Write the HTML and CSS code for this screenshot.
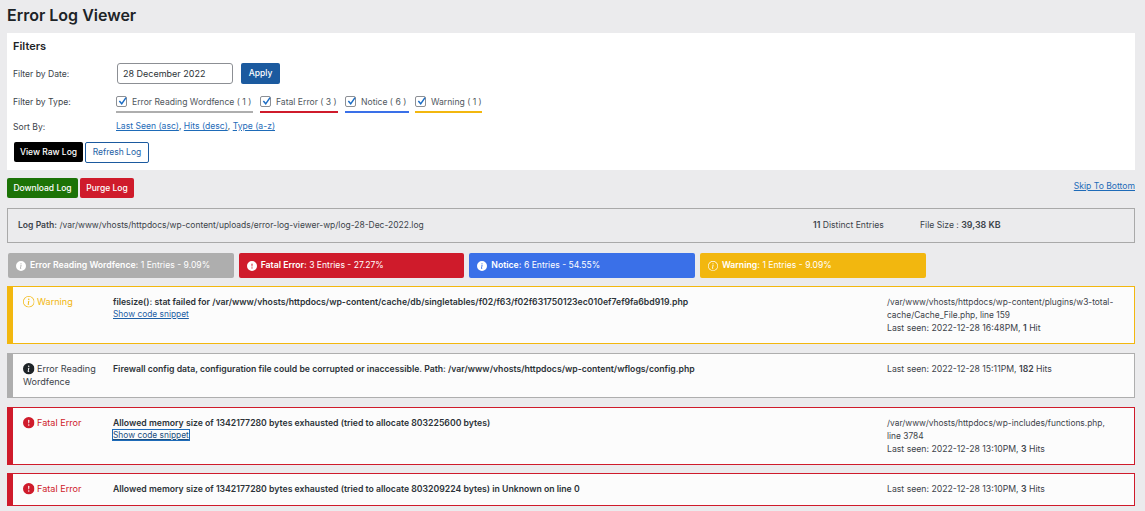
FILE: index.html
```html
<!DOCTYPE html>
<html lang="en">
<head>
<meta charset="utf-8">
<title>Error Log Viewer</title>
<link rel="stylesheet" href="styles.css">
</head>
<body>
<svg class="defs" width="0" height="0" aria-hidden="true">
  <symbol id="info-solid" viewBox="0 0 16 16"><path fill="currentColor" d="M8 16A8 8 0 1 0 8 0a8 8 0 0 0 0 16zm.93-9.41-1 4.71c-.07.34.03.53.3.53.2 0 .49-.07.69-.25l-.09.42c-.29.35-.92.6-1.46.6-.7 0-1-.42-.81-1.31l.74-3.47c.06-.29 0-.4-.29-.47l-.45-.08.08-.38 2.29-.3zM8 5.5a1 1 0 1 1 0-2 1 1 0 0 1 0 2z"/></symbol>
  <symbol id="info-line" viewBox="0 0 16 16"><path fill="currentColor" d="M8 15A7 7 0 1 1 8 1a7 7 0 0 1 0 14zm0 1A8 8 0 1 0 8 0a8 8 0 0 0 0 16z"/><path fill="currentColor" d="m8.93 6.59-2.29.29-.08.38.45.08c.29.07.35.18.29.47l-.74 3.47c-.19.89.11 1.31.81 1.31.54 0 1.17-.25 1.46-.6l.09-.42c-.2.18-.49.25-.69.25-.27 0-.37-.19-.3-.53l1-4.7zM9 4.5a1 1 0 1 1-2 0 1 1 0 0 1 2 0z"/></symbol>
  <symbol id="alert-solid" viewBox="0 0 16 16"><path fill="currentColor" d="M16 8A8 8 0 1 1 0 8a8 8 0 0 1 16 0zM8 4a.9.9 0 0 0-.9.99l.35 3.5a.55.55 0 0 0 1.1 0l.35-3.5A.9.9 0 0 0 8 4zm0 6a1 1 0 1 0 0 2 1 1 0 0 0 0-2z"/></symbol>
  <symbol id="check" viewBox="0 0 14 14"><path fill="none" stroke="currentColor" stroke-width="1.9" d="M3 6.5 6 10l5.5-8"/></symbol>
</svg>

<h1 class="page-title">Error Log Viewer</h1>

<section class="filters">
  <h2 class="filters-title">Filters</h2>
  <div class="filter-row row-date">
    <span class="filter-label">Filter by Date:</span>
    <div class="filter-value">
      <input class="date-input" type="text" value="28 December 2022">
      <button class="btn btn-blue" type="button">Apply</button>
    </div>
  </div>
  <div class="filter-row row-type">
    <span class="filter-label">Filter by Type:</span>
    <div class="filter-value type-list">
      <label class="type type-grey"><span class="box"><svg class="box-check"><use href="#check"/></svg></span>Error Reading Wordfence ( 1 )</label>
      <label class="type type-red"><span class="box"><svg class="box-check"><use href="#check"/></svg></span>Fatal Error ( 3 )</label>
      <label class="type type-blue"><span class="box"><svg class="box-check"><use href="#check"/></svg></span>Notice ( 6 )</label>
      <label class="type type-yellow"><span class="box"><svg class="box-check"><use href="#check"/></svg></span>Warning ( 1 )</label>
    </div>
  </div>
  <div class="filter-row row-sort">
    <span class="filter-label">Sort By:</span>
    <div class="filter-value sort-links"><a href="#">Last Seen (asc)</a>, <a href="#">Hits (desc)</a>, <a href="#">Type (a-z)</a></div>
  </div>
  <div class="raw-actions">
    <button class="btn btn-black" type="button">View Raw Log</button>
    <button class="btn btn-outline" type="button">Refresh Log</button>
  </div>
</section>

<div class="log-actions">
  <div class="log-buttons">
    <button class="btn btn-green" type="button">Download Log</button>
    <button class="btn btn-red" type="button">Purge Log</button>
  </div>
  <a class="skip" href="#">Skip To Bottom</a>
</div>

<div class="log-path">
  <span class="path-text"><b>Log Path:</b> /var/www/vhosts/httpdocs/wp-content/uploads/error-log-viewer-wp/log-28-Dec-2022.log</span>
  <span class="path-count"><b>11</b> Distinct Entries</span>
  <span class="path-size">File Size : <b>39,38 KB</b></span>
</div>

<div class="stats">
  <div class="stat stat-grey"><svg class="stat-icon"><use href="#info-solid"/></svg><span><b>Error Reading Wordfence:</b> 1 Entries - 9.09%</span></div>
  <div class="stat stat-red"><svg class="stat-icon"><use href="#alert-solid"/></svg><span><b>Fatal Error:</b> 3 Entries - 27.27%</span></div>
  <div class="stat stat-blue"><svg class="stat-icon"><use href="#info-solid"/></svg><span><b>Notice:</b> 6 Entries - 54.55%</span></div>
  <div class="stat stat-yellow"><svg class="stat-icon"><use href="#info-line"/></svg><span><b>Warning:</b> 1 Entries - 9.09%</span></div>
</div>

<article class="entry entry-yellow entry-h58">
  <div class="entry-type"><svg class="entry-icon"><use href="#info-line"/></svg> Warning</div>
  <div class="entry-msg"><b>filesize(): stat failed for /var/www/vhosts/httpdocs/wp-content/cache/db/singletables/f02/f63/f02f631750123ec010ef7ef9fa6bd919.php</b><br><a href="#">Show code snippet</a></div>
  <div class="entry-meta"><span class="file-path">/var/www/vhosts/httpdocs/wp-content/plugins/w3-total-cache/Cache_File.php, line 159</span><br>Last seen: 2022-12-28 16:48PM, <b>1</b> Hit</div>
</article>

<article class="entry entry-grey entry-h45">
  <div class="entry-type"><svg class="entry-icon"><use href="#info-solid"/></svg> Error Reading Wordfence</div>
  <div class="entry-msg"><b>Firewall config data, configuration file could be corrupted or inaccessible. Path: /var/www/vhosts/httpdocs/wp-content/wflogs/config.php</b></div>
  <div class="entry-meta">Last seen: 2022-12-28 15:11PM, <b>182</b> Hits</div>
</article>

<article class="entry entry-red entry-h58 entry-tight">
  <div class="entry-type"><svg class="entry-icon"><use href="#alert-solid"/></svg> Fatal Error</div>
  <div class="entry-msg"><b>Allowed memory size of 1342177280 bytes exhausted (tried to allocate 803225600 bytes)</b><br><a class="focused" href="#">Show code snippet</a></div>
  <div class="entry-meta"><span class="file-path">/var/www/vhosts/httpdocs/wp-includes/functions.php, line 3784</span><br>Last seen: 2022-12-28 13:10PM, <b>3</b> Hits</div>
</article>

<article class="entry entry-red entry-h33">
  <div class="entry-type"><svg class="entry-icon"><use href="#alert-solid"/></svg> Fatal Error</div>
  <div class="entry-msg"><b>Allowed memory size of 1342177280 bytes exhausted (tried to allocate 803209224 bytes) in Unknown on line 0</b></div>
  <div class="entry-meta">Last seen: 2022-12-28 13:10PM, <b>3</b> Hits</div>
</article>
</body>
</html>
```

FILE: styles.css
```css
* { box-sizing: border-box; }
html { background: #ebebed; }
body {
  margin: 0;
  padding: 0 10px 0 7px;
  height: 511px;
  overflow: hidden;
  font-family: Inter, "Liberation Sans", sans-serif;
  font-size: 8.6px;
  line-height: 13px;
  color: #3c434a;
  -webkit-font-smoothing: antialiased;
}
b { font-weight: 600; font-size: 8.7px; }
a { color: #1e5fa5; text-decoration: underline; }
.defs { position: absolute; }

.page-title {
  margin: 0;
  height: 33px;
  padding-top: 5px;
  font-size: 16px;
  line-height: 20px;
  font-weight: 600;
  color: #1d2327;
}

.filters {
  display: flex;
  flex-direction: column;
  height: 137px;
  padding: 7px 6px 0;
  background: #fff;
}
.filters-title {
  margin: 0 0 10px;
  font-size: 11px;
  line-height: 13px;
  font-weight: 600;
  color: #1d2327;
}
.filter-row { display: flex; align-items: center; }
.filter-label { flex: 0 0 103px; }
.row-date { height: 21px; }
.row-date .filter-label { padding-top: 1px; }
.row-type { height: 19px; margin-top: 10px; align-items: flex-start; }
.row-sort { height: 13px; margin-top: 7px; }
.row-sort .filter-label { padding-top: 1px; }
.row-type .filter-label { padding-top: 2px; }
.filter-value { display: flex; align-items: center; white-space: pre; }
.date-input {
  width: 116px;
  height: 21px;
  padding: 0 5px 1px;
  margin: 0 8px 0 1px;
  border: 1px solid #8c8f94;
  border-radius: 3px;
  background: #fff;
  font: 9px/13px Inter, "Liberation Sans", sans-serif;
  color: #2c3338;
  outline: none;
}
.btn {
  height: 21px;
  padding: 0;
  border: 0;
  border-radius: 2px;
  font: 500 8.5px/13px Inter, "Liberation Sans", sans-serif;
  color: #fff;
  white-space: nowrap;
  cursor: pointer;
}
.btn-blue { width: 39px; background: #1b5a9f; }
.btn-black { width: 69px; height: 20px; background: #000; }
.btn-outline { width: 64px; background: #fff; color: #1e5fa5; border: 1px solid #1b5a9f; font-weight: 400; }
.btn-green { width: 71px; height: 20px; background: #1c7307; }
.btn-red { width: 54px; height: 20px; background: #cf1b2b; }

.type-list { gap: 7px; }
.type {
  display: flex;
  align-items: flex-start;
  height: 19px;
  padding-top: 2px;
  border-bottom: 2px solid;
  color: #50575e;
}
.box {
  display: block;
  position: relative;
  width: 11px;
  height: 11px;
  margin-right: 5px;
  border: 1px solid #8c8f94;
  border-radius: 2px;
  background: #fff;
}
.box-check {
  position: absolute;
  left: 0;
  top: -1px;
  width: 11px;
  height: 11px;
  color: #1b6cc4;
}
.type-grey { width: 137px; border-color: #aeaeae; }
.type-red { width: 78px; border-color: #cf1b2b; }
.type-blue { width: 64px; border-color: #3a70e8; }
.type-yellow { width: 67px; margin-left: -1px; border-color: #f2b70f; }

.sort-links a { color: #1e6bb8; }
.raw-actions { display: flex; gap: 2px; margin: 9px 0 0 1px; }

.log-actions {
  display: flex;
  justify-content: space-between;
  align-items: center;
  height: 20px;
  margin-top: 8px;
}
.log-buttons { display: flex; gap: 2px; }
.skip { color: #1e6bb8; margin-top: -3px; }

.log-path {
  display: flex;
  align-items: center;
  height: 35px;
  margin-top: 10px;
  padding: 0 0 1px 10px;
  border: 1px solid #a9a9a9;
}
.path-text { flex: 0 0 795px; font-size: 8.48px; }
.path-text b { font-size: 8.6px; }
.path-count { flex: 0 0 107px; }
.path-size b { font-size: 8.9px; }

.stats {
  display: flex;
  gap: 5px;
  height: 25px;
  margin: 10px 0 8px 1px;
}
.stat {
  display: flex;
  align-items: center;
  width: 225.67px;
  padding-left: 8px;
  border-radius: 2px;
  color: #fff;
}
.stat-icon { width: 10px; height: 10px; margin-right: 4px; flex: none; }
.stat-grey { background: #aeaeae; }
.stat-red { background: #cf1b2b; }
.stat-blue { background: #3a70e8; }
.stat-yellow { background: #f2b70f; }

.entry {
  display: flex;
  margin-bottom: 9px;
  padding: 8px 0 0 10px;
  background: #fcfcfc;
  border: 1px solid;
  border-left-width: 6px;
}
.entry-h58 { height: 58px; }
.entry-h45 { height: 45px; }
.entry-h33 { height: 33px; margin-bottom: 0; }
.entry-tight { margin-bottom: 8px; }
.entry-type { flex: 0 0 90px; padding-right: 6px; font-size: 9.1px; }
.entry-icon { width: 11.5px; height: 11.5px; vertical-align: -2.5px; }
.entry-msg { flex: 0 0 774px; line-height: 12px; padding-top: 1px; color: #2c3338; }
.entry-msg a { font-size: 8.4px; }
.entry-meta { flex: 0 0 234px; padding-top: 1px; font-size: 8.68px; }
.file-path { font-size: 8.4px; }
.entry-yellow { border-color: #f2b70f; }
.entry-yellow .entry-type { color: #f2b70f; }
.entry-grey { border-color: #aeaeae; }
.entry-grey .entry-icon { color: #1d2327; }
.entry-red { border-color: #cf1b2b; }
.entry-red .entry-type { color: #cf1b2b; }
.focused { outline: 1px solid #1e6bb8; color: #1d4f80; }
```
